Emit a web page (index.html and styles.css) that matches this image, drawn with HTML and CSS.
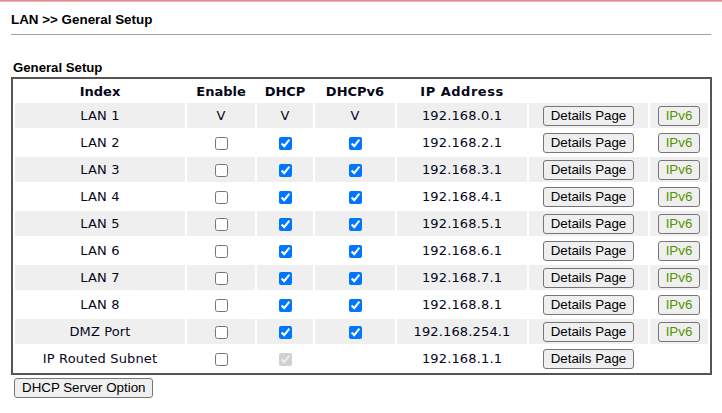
FILE: index.html
```html
<!DOCTYPE html>
<html>
<head>
<meta charset="utf-8">
<title>LAN General Setup</title>
<link rel="stylesheet" href="styles.css">
</head>
<body>
<div class="topline"></div>
<div class="page">
  <div class="crumb">LAN &gt;&gt; General Setup</div>
  <div class="rule"></div>
  <div class="subtitle">General Setup</div>
  <table class="grid">
    <colgroup>
      <col class="c-index">
      <col class="c-enable">
      <col class="c-dhcp">
      <col class="c-dhcp6">
      <col class="c-ip">
      <col class="c-details">
      <col class="c-v6">
    </colgroup>
    <thead>
      <tr><th>Index</th><th>Enable</th><th>DHCP</th><th>DHCPv6</th><th class="wide">IP Address</th><th></th><th></th></tr>
    </thead>
    <tbody>
      <tr class="alt"><td>LAN 1</td><td>V</td><td>V</td><td>V</td><td>192.168.0.1</td><td><button class="btn">Details Page</button></td><td><button class="btn v6">IPv6</button></td></tr>
      <tr><td>LAN 2</td><td><input type="checkbox"></td><td><input type="checkbox" checked></td><td><input type="checkbox" checked></td><td>192.168.2.1</td><td><button class="btn">Details Page</button></td><td><button class="btn v6">IPv6</button></td></tr>
      <tr class="alt"><td>LAN 3</td><td><input type="checkbox"></td><td><input type="checkbox" checked></td><td><input type="checkbox" checked></td><td>192.168.3.1</td><td><button class="btn">Details Page</button></td><td><button class="btn v6">IPv6</button></td></tr>
      <tr><td>LAN 4</td><td><input type="checkbox"></td><td><input type="checkbox" checked></td><td><input type="checkbox" checked></td><td>192.168.4.1</td><td><button class="btn">Details Page</button></td><td><button class="btn v6">IPv6</button></td></tr>
      <tr class="alt"><td>LAN 5</td><td><input type="checkbox"></td><td><input type="checkbox" checked></td><td><input type="checkbox" checked></td><td>192.168.5.1</td><td><button class="btn">Details Page</button></td><td><button class="btn v6">IPv6</button></td></tr>
      <tr><td>LAN 6</td><td><input type="checkbox"></td><td><input type="checkbox" checked></td><td><input type="checkbox" checked></td><td>192.168.6.1</td><td><button class="btn">Details Page</button></td><td><button class="btn v6">IPv6</button></td></tr>
      <tr class="alt"><td>LAN 7</td><td><input type="checkbox"></td><td><input type="checkbox" checked></td><td><input type="checkbox" checked></td><td>192.168.7.1</td><td><button class="btn">Details Page</button></td><td><button class="btn v6">IPv6</button></td></tr>
      <tr><td>LAN 8</td><td><input type="checkbox"></td><td><input type="checkbox" checked></td><td><input type="checkbox" checked></td><td>192.168.8.1</td><td><button class="btn">Details Page</button></td><td><button class="btn v6">IPv6</button></td></tr>
      <tr class="alt"><td>DMZ Port</td><td><input type="checkbox"></td><td><input type="checkbox" checked></td><td><input type="checkbox" checked></td><td>192.168.254.1</td><td><button class="btn">Details Page</button></td><td><button class="btn v6">IPv6</button></td></tr>
      <tr><td>IP Routed Subnet</td><td><input type="checkbox"></td><td><input type="checkbox" checked disabled></td><td></td><td>192.168.1.1</td><td><button class="btn">Details Page</button></td><td></td></tr>
    </tbody>
  </table>
  <button class="btn option">DHCP Server Option</button>
</div>
</body>
</html>
```

FILE: styles.css
```css
html, body {
  margin: 0;
  padding: 0;
  background: #ffffff;
}

.topline {
  height: 2px;
  background: linear-gradient(#de7a7a, #f3c8c8);
}

.page {
  padding: 0 11px;
  font-family: "Liberation Sans", Arial, sans-serif;
  color: #000;
}

.crumb {
  margin-top: 10px;
  font-size: 13.4px;
  font-weight: bold;
  line-height: 16px;
  height: 16px;
}

.rule {
  margin-top: 6px;
  width: 700px;
  height: 1px;
  background: #a0a0a0;
}

.subtitle {
  margin-top: 25px;
  padding-left: 2px;
  font-size: 13.2px;
  font-weight: bold;
  line-height: 16px;
  height: 16px;
}

.grid {
  margin-top: 1px;
  width: 701px;
  table-layout: fixed;
  border: 2px solid #555555;
  border-spacing: 2px;
  font-family: "DejaVu Sans", Verdana, sans-serif;
  font-size: 13px;
  color: #06061a;
}

.c-index { width: 170px; }
.c-enable { width: 68px; }
.c-dhcp { width: 56px; }
.c-dhcp6 { width: 80px; }
.c-ip { width: 130px; }
.c-details { width: 119px; }
.c-v6 { width: 58px; }

.grid th {
  height: 20px;
  padding: 0;
  font-weight: bold;
  text-align: center;
  vertical-align: middle;
}

.grid th.wide {
  letter-spacing: 0.5px;
}

.grid td {
  height: 25px;
  padding: 0;
  text-align: center;
  vertical-align: middle;
  letter-spacing: 0.15px;
}

.grid tr.alt td {
  background: #efefef;
}

.grid input[type="checkbox"] {
  width: 13px;
  height: 13px;
  margin: 0;
  vertical-align: middle;
}

.btn {
  font-family: "Liberation Sans", Arial, sans-serif;
  font-size: 13.333px;
  line-height: 16px;
  letter-spacing: 0;
  padding: 1px 7px;
  border: 1px solid #767676;
  border-radius: 3px;
  background: #efefef;
  color: #000;
  vertical-align: middle;
  margin: 0;
}

.btn.v6 {
  color: #559400;
}

.btn.option {
  margin-top: 3px;
  margin-left: 3px;
  padding: 1px 7px;
}
```
